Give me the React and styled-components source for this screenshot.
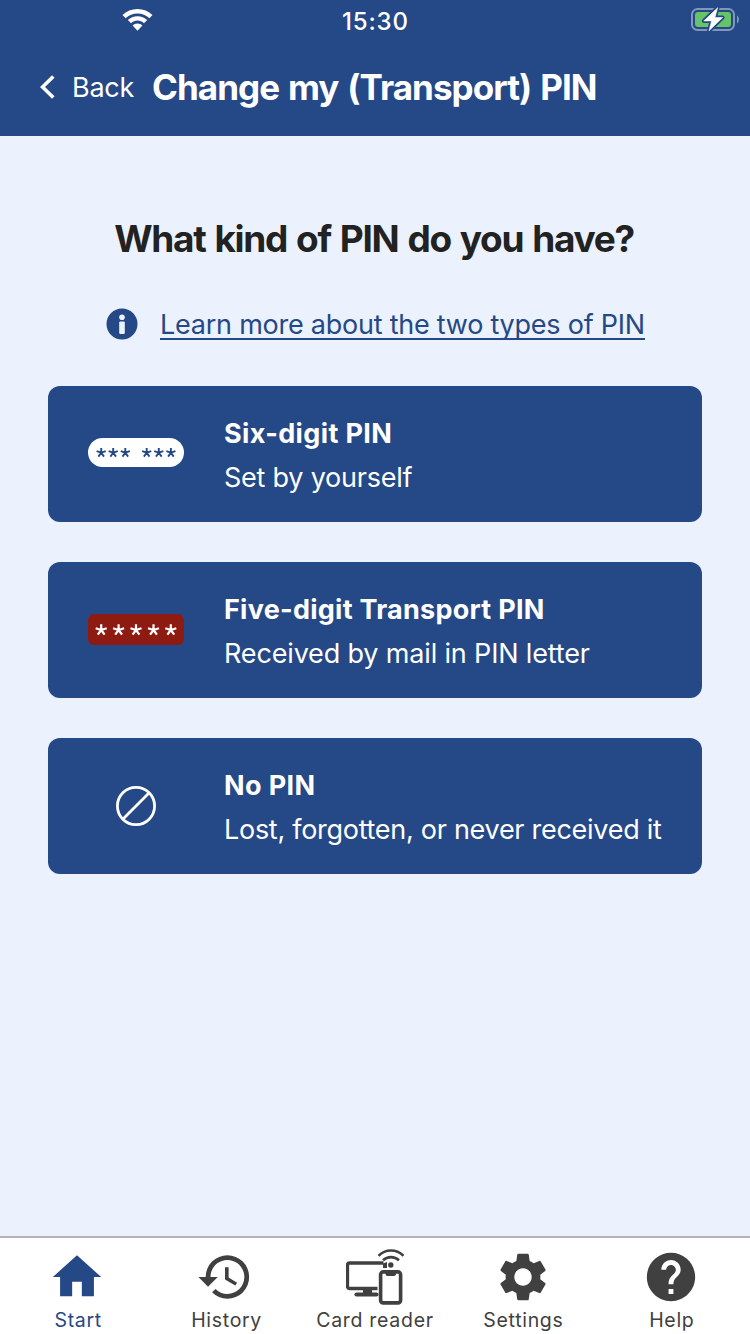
import React from 'react';
import styled, { createGlobalStyle } from 'styled-components';
import { MdHome, MdHistory, MdSettings, MdHelp } from 'react-icons/md';

const blue = '#254886';
const pale = '#ebf2fd';

const GlobalStyle = createGlobalStyle`
  * { box-sizing: border-box; }
  body { margin: 0; background: ${pale}; font-family: Inter, "Liberation Sans", sans-serif; }
  button { font: inherit; border: 0; padding: 0; background: none; color: inherit; cursor: pointer; }
  svg { display: block; flex: none; }
`;

const Screen = styled.div`
  display: flex;
  flex-direction: column;
  width: 750px;
  height: 1334px;
  overflow: hidden;
  white-space: nowrap;
`;

const Header = styled.header`
  height: 136px;
  background: ${blue};
  color: #fff;
`;

const StatusBar = styled.div`
  display: grid;
  grid-template-columns: 220px auto 1fr;
  height: 40px;
  align-items: center;
  padding: 0 10px 0 122px;
`;

const Clock = styled.time`
  font-size: 24px;
  line-height: 28px;
  font-weight: 500;
  letter-spacing: 0.85px;
  padding-top: 3px;
`;

const StatusRight = styled.div`
  display: flex;
  justify-content: flex-end;
`;

const TitleBar = styled.div`
  display: flex;
  align-items: center;
  height: 96px;
  padding: 0 0 2px 40px;
`;

const BackButton = styled.button`
  display: flex;
  align-items: center;
  gap: 17px;
  width: 112px;
  font-size: 27px;
  line-height: 34px;
  letter-spacing: -0.25px;
`;

const BackLabel = styled.span`
  padding-top: 2px;
`;

const Title = styled.h1`
  margin: 0;
  font-size: 35px;
  line-height: 44px;
  font-weight: 700;
  letter-spacing: -0.95px;
  word-spacing: 1.5px;
`;

const Main = styled.main`
  flex: 1;
  padding: 80px 48px 0;
`;

const Question = styled.h2`
  margin: 0;
  padding-right: 2px;
  text-align: center;
  color: #222;
  font-size: 37px;
  line-height: 46px;
  font-weight: 700;
  letter-spacing: -1.3px;
  word-spacing: 1.5px;
`;

const InfoRow = styled.div`
  display: flex;
  align-items: center;
  gap: 22px;
  height: 40px;
  margin: 42px 0 42px 58px;
`;

const InfoLink = styled.a`
  padding-top: 4px;
  color: ${blue};
  font-size: 27px;
  line-height: 26px;
  letter-spacing: -0.24px;
  border-bottom: 2px solid ${blue};
`;

const Options = styled.div`
  display: flex;
  flex-direction: column;
  gap: 40px;
`;

const OptionCard = styled.button`
  display: flex;
  align-items: center;
  height: 136px;
  padding-left: 40px;
  border-radius: 12px;
  background: ${blue};
  color: #fff;
  text-align: left;
`;

const OptionIcon = styled.span`
  display: flex;
  justify-content: center;
  width: 96px;
  margin-right: 40px;
`;

const OptionText = styled.span`
  display: flex;
  flex-direction: column;
  padding-top: 4px;
  font-size: 27px;
  line-height: 44px;
`;

const OptionTitle = styled.strong`
  font-weight: 700;
  letter-spacing: ${(p) => p.$spacing}px;
`;

const OptionNote = styled.span`
  letter-spacing: ${(p) => p.$spacing}px;
`;

const TabBar = styled.nav`
  display: grid;
  grid-template-columns: repeat(5, 1fr);
  height: 98px;
  padding: 0 4px;
  border-top: 2px solid #b3b3b3;
  background: #fff;
`;

const Tab = styled.button`
  display: flex;
  flex-direction: column;
  align-items: center;
  padding-top: 10px;
  color: ${(p) => (p.$active ? blue : '#404040')};
`;

const TabIcon = styled.span`
  margin-left: ${(p) => p.$shift || 0}px;
`;

const TabLabel = styled.span`
  margin-top: 2px;
  font-size: 19.5px;
  line-height: 24px;
  letter-spacing: 0.7px;
`;

function WifiIcon() {
  return (
    <svg width="31" height="22" viewBox="0 0 31 22">
      <path fill="#fff" d="M15.5 0C21.3 0 26.6 2.2 30.5 6.1L27.4 9.2C24.2 6.1 20.1 4.5 15.5 4.5S6.8 6.1 3.6 9.2L.5 6.1C4.4 2.2 9.7 0 15.5 0ZM15.5 7.2C19.2 7.2 22.6 8.6 25.2 11L22 14.2C20.2 12.5 18 11.6 15.5 11.6S10.8 12.5 9 14.2L5.8 11C8.4 8.6 11.8 7.2 15.5 7.2ZM15.5 14.6C17.5 14.6 19.2 15.3 20.4 16.6L15.5 21.7 10.6 16.6C11.8 15.3 13.5 14.6 15.5 14.6Z" />
    </svg>
  );
}

function BatteryIcon() {
  const bolt = 'M26.6 -0.2L12.8 12.9H20.6L18 22.8 31.6 9.6H23.9Z';
  return (
    <svg width="49" height="24" viewBox="0 0 49 24" overflow="visible">
      <rect x="1" y="1" width="42" height="21" rx="5.5" fill="none" stroke="#8296ba" strokeWidth="2" />
      <rect x="4" y="4" width="36" height="15" rx="3" fill="#65c466" />
      <path d="M46 7.5C48.6 8.7 48.6 14 46 15.5Z" fill="#8296ba" />
      <path d={bolt} fill="#fff" stroke={blue} strokeWidth="4" strokeLinejoin="round" />
      <path d={bolt} fill="#fff" stroke="#fff" strokeWidth="0.6" strokeLinejoin="round" />
    </svg>
  );
}

function ChevronIcon() {
  return (
    <svg width="15" height="24" viewBox="0 0 15 24">
      <path d="M13.3 1.5L2.5 12 13.3 22.5" fill="none" stroke="#fff" strokeWidth="3.6" />
    </svg>
  );
}

function InfoIcon() {
  return (
    <svg width="32" height="32" viewBox="0 0 32 32">
      <circle cx="16" cy="16" r="15.5" fill={blue} />
      <circle cx="16" cy="9.2" r="2.8" fill={pale} />
      <rect x="13.2" y="13.4" width="5.6" height="12.6" rx="1.2" fill={pale} />
    </svg>
  );
}

function Stars({ xs, y, r, color, width }) {
  return xs.map((x) => (
    <path
      key={x}
      d={[0, 72, 144, 216, 288]
        .map((deg) => {
          const a = (deg * Math.PI) / 180;
          return `M${x} ${y}L${x + r * Math.sin(a)} ${y - r * Math.cos(a)}`;
        })
        .join('')}
      stroke={color}
      strokeWidth={width}
      fill="none"
    />
  ));
}

function SixDigitIcon() {
  return (
    <svg width="96" height="32" viewBox="0 0 96 32">
      <rect width="96" height="29" rx="14.5" fill="#fff" />
      <Stars xs={[13.2, 25.2, 37.3, 58.7, 70.8, 82.9]} y={14.7} r={4.8} color={blue} width={1.9} />
    </svg>
  );
}

function FiveDigitIcon() {
  return (
    <svg width="96" height="32" viewBox="0 0 96 32">
      <rect width="96" height="31" rx="6" fill="#8e1b12" />
      <Stars xs={[13.2, 30.6, 48, 65.5, 82.8]} y={16} r={5.8} color="#fff" width={2.2} />
    </svg>
  );
}

function NoPinIcon() {
  return (
    <svg width="40" height="40" viewBox="0 0 40 40">
      <circle cx="20" cy="20" r="18.6" fill="none" stroke="#fff" strokeWidth="2.8" />
      <path d="M6.8 33.2L33.2 6.8" stroke="#fff" strokeWidth="2.8" />
    </svg>
  );
}

function CardReaderIcon() {
  return (
    <svg width="58" height="58" viewBox="0 0 58 58" fill="none" stroke="currentColor">
      <path d="M37.5 15H3.5Q1.5 15 1.5 17V38.5Q1.5 40.5 3.5 40.5H31.5" strokeWidth="3.3" />
      <path d="M17 41H26V46H17Z" fill="currentColor" stroke="none" />
      <path d="M10.5 46.5H30.5" strokeWidth="4.2" strokeLinecap="round" />
      <rect x="34.6" y="23.9" width="20" height="31" rx="2.6" strokeWidth="3.6" />
      <path d="M39.5 23.5H50V26Q50 28 48 28H41.5Q39.5 28 39.5 26Z" fill="currentColor" stroke="none" />
      <path d="M37 15.5L41 14V20H37Z" fill="currentColor" stroke="none" />
      <circle cx="44.8" cy="17" r="2.7" fill="currentColor" stroke="none" />
      <path d="M32.5 7.8C39.5 0.8 50.5 0.8 57.5 7.8M37 12.3C41.5 8 48.5 8 53 12.3" strokeWidth="2.6" />
    </svg>
  );
}

const options = [
  { title: 'Six-digit PIN', note: 'Set by yourself', Icon: SixDigitIcon, titleSpacing: 0.38, noteSpacing: -0.23 },
  { title: 'Five-digit Transport PIN', note: 'Received by mail in PIN letter', Icon: FiveDigitIcon, titleSpacing: 0.26, noteSpacing: -0.16 },
  { title: 'No PIN', note: 'Lost, forgotten, or never received it', Icon: NoPinIcon, titleSpacing: 0.38, noteSpacing: -0.28 },
];

const tabs = [
  { label: 'Start', Icon: MdHome, active: true, shift: -2 },
  { label: 'History', Icon: MdHistory, shift: -4 },
  { label: 'Card reader', Icon: CardReaderIcon },
  { label: 'Settings', Icon: MdSettings },
  { label: 'Help', Icon: MdHelp, shift: -2 },
];

export default function App() {
  return (
    <Screen>
      <GlobalStyle />
      <Header>
        <StatusBar>
          <WifiIcon />
          <Clock>15:30</Clock>
          <StatusRight><BatteryIcon /></StatusRight>
        </StatusBar>
        <TitleBar>
          <BackButton><ChevronIcon /><BackLabel>Back</BackLabel></BackButton>
          <Title>Change my (Transport) PIN</Title>
        </TitleBar>
      </Header>
      <Main>
        <Question>What kind of PIN do you have?</Question>
        <InfoRow>
          <InfoIcon />
          <InfoLink>Learn more about the two types of PIN</InfoLink>
        </InfoRow>
        <Options>
          {options.map(({ title, note, Icon, titleSpacing, noteSpacing }) => (
            <OptionCard key={title}>
              <OptionIcon><Icon /></OptionIcon>
              <OptionText>
                <OptionTitle $spacing={titleSpacing}>{title}</OptionTitle>
                <OptionNote $spacing={noteSpacing}>{note}</OptionNote>
              </OptionText>
            </OptionCard>
          ))}
        </Options>
      </Main>
      <TabBar>
        {tabs.map(({ label, Icon, active, shift }) => (
          <Tab key={label} $active={active}>
            <TabIcon $shift={shift}><Icon size={58} /></TabIcon>
            <TabLabel>{label}</TabLabel>
          </Tab>
        ))}
      </TabBar>
    </Screen>
  );
}
